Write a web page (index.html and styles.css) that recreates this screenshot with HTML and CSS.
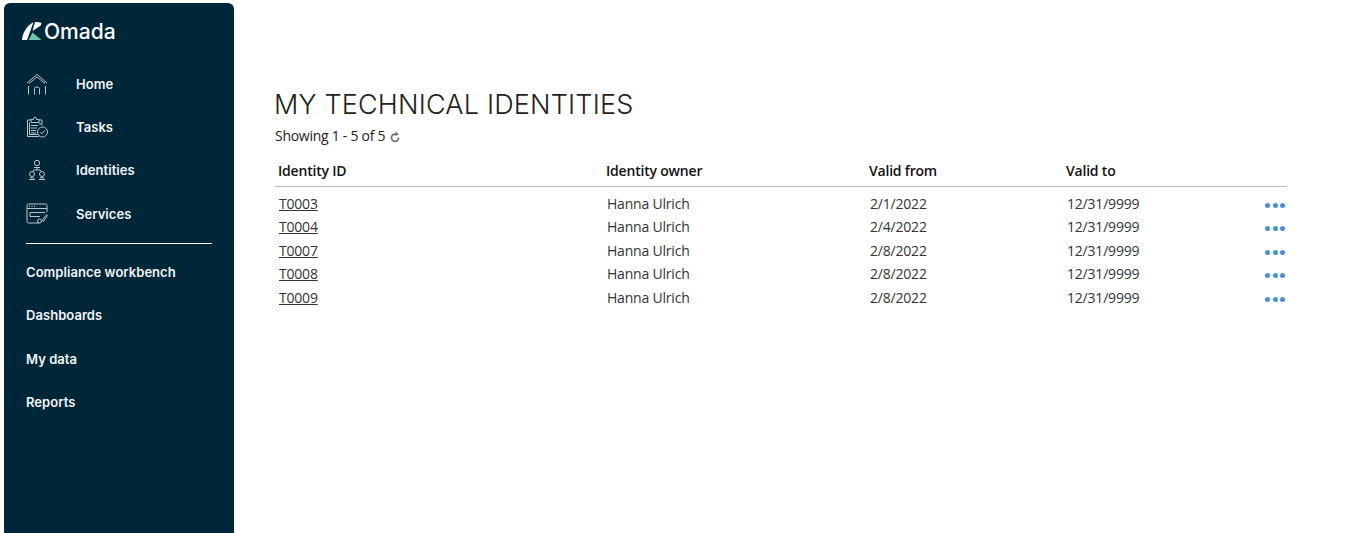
FILE: index.html
```html
<!DOCTYPE html>
<html lang="en">
<head>
<meta charset="utf-8">
<title>My technical identities</title>
<link rel="stylesheet" href="styles.css">
</head>
<body>
<div class="app">
  <nav class="sidebar">
    <div class="logo">
      <svg class="logo-mark" viewBox="0 0 20 18" width="20" height="18">
        <path d="M0 18 C0.5 11 4.5 4 11.5 0 L8.5 8.5 L5 18 Z" fill="#fff"/>
        <path d="M13 0 C15.5 0 17.8 0.3 19.5 1 L18.8 3.5 L10.5 9 Z" fill="#fff"/>
        <path d="M10.5 10.5 L19.5 18 L6.5 18 Z" fill="#6fc6a6"/>
      </svg>
      <span class="logo-text">Omada</span>
    </div>
    <ul class="main-nav">
      <li class="nav-item">
        <svg class="nav-icon" viewBox="0 0 22 22" width="22" height="22" fill="none" stroke="#b9c4ca" stroke-width="1">
          <path d="M1 10 L11 1.5 L21 10"/><path d="M3 10.5 L11 4 L19 10.5"/><path d="M2.5 13 V21.5 M19.5 13 V21.5"/><path d="M8.5 21.5 V15.5 Q8.5 14 11 14 Q13.5 14 13.5 15.5 V21.5"/>
        </svg>
        <span>Home</span>
      </li>
      <li class="nav-item">
        <svg class="nav-icon" viewBox="0 0 22 22" width="22" height="22" fill="none" stroke="#b9c4ca" stroke-width="1">
          <path d="M13 20.5 H1.5 V4 H5 M13 4 H16 V9.5"/><path d="M5 3.5 H7.5 Q7.5 1 9 1 Q10.5 1 10.5 3.5 H13 V6.5 H5 Z"/><path d="M3.5 6.5 V18.5 H11.5 M14 6.5 V9"/><path d="M5 9.5 H12 M5 12 H11 M5 14.5 H10 M5 17 H10"/><circle cx="16.5" cy="16" r="5"/><path d="M14.3 16 L16 17.8 L18.8 14.4"/>
        </svg>
        <span>Tasks</span>
      </li>
      <li class="nav-item">
        <svg class="nav-icon" viewBox="0 0 22 22" width="22" height="22" fill="none" stroke="#b9c4ca" stroke-width="1">
          <circle cx="11" cy="4" r="2.7"/><path d="M8 8.5 H14"/><path d="M11 8.5 V11 M6 13 L8 11 H14 L16 13"/><circle cx="6" cy="15" r="2.5"/><circle cx="16" cy="15" r="2.5"/><path d="M3 20.5 H9 M13 20.5 H19 M4 18.8 H8 M14 18.8 H18"/>
        </svg>
        <span>Identities</span>
      </li>
      <li class="nav-item">
        <svg class="nav-icon" viewBox="0 0 22 22" width="22" height="22" fill="none" stroke="#b9c4ca" stroke-width="1">
          <path d="M13 20 H2.5 Q1 20 1 18.5 V2.5 Q1 1 2.5 1 H19.5 Q21 1 21 2.5 V9"/><path d="M1 5.5 H21"/><path d="M3 3.3 H4 M5.5 3.3 H6.5 M8 3.3 H9" stroke-width="1.2"/><path d="M19 9.5 H4 V13.5 H14"/><path d="M15 19 L20.5 11.5 L21.5 12.5 L17 19"/><circle cx="13.5" cy="18" r="2"/>
        </svg>
        <span>Services</span>
      </li>
    </ul>
    <hr class="nav-rule">
    <ul class="sub-nav">
      <li>Compliance workbench</li>
      <li>Dashboards</li>
      <li>My data</li>
      <li>Reports</li>
    </ul>
  </nav>
  <main class="content">
    <h1 class="title">MY TECHNICAL IDENTITIES</h1>
    <p class="summary">Showing 1 - 5 of 5
      <svg class="refresh" viewBox="0 0 10 12" width="10" height="12" fill="none" stroke="#777" stroke-width="1.8">
        <path d="M6.8 3.6 A3.6 3.6 0 1 0 8.6 6.5"/><path d="M5.4 0.4 V5.2 L9 3.2 Z" fill="#777" stroke="none"/>
      </svg>
    </p>
    <table class="grid">
      <thead>
        <tr><th class="c-id">Identity ID</th><th class="c-owner">Identity owner</th><th class="c-from">Valid from</th><th class="c-to">Valid to</th><th class="c-act"></th></tr>
      </thead>
      <tbody>
        <tr><td><a href="#">T0003</a></td><td>Hanna Ulrich</td><td>2/1/2022</td><td>12/31/9999</td><td class="act"><span class="dots"><i></i><i></i><i></i></span></td></tr>
        <tr><td><a href="#">T0004</a></td><td>Hanna Ulrich</td><td>2/4/2022</td><td>12/31/9999</td><td class="act"><span class="dots"><i></i><i></i><i></i></span></td></tr>
        <tr><td><a href="#">T0007</a></td><td>Hanna Ulrich</td><td>2/8/2022</td><td>12/31/9999</td><td class="act"><span class="dots"><i></i><i></i><i></i></span></td></tr>
        <tr><td><a href="#">T0008</a></td><td>Hanna Ulrich</td><td>2/8/2022</td><td>12/31/9999</td><td class="act"><span class="dots"><i></i><i></i><i></i></span></td></tr>
        <tr><td><a href="#">T0009</a></td><td>Hanna Ulrich</td><td>2/8/2022</td><td>12/31/9999</td><td class="act"><span class="dots"><i></i><i></i><i></i></span></td></tr>
      </tbody>
    </table>
  </main>
</div>
</body>
</html>
```
FILE: styles.css
```css
* { box-sizing: border-box; }
html, body { margin: 0; height: 100%; overflow: hidden; background: #fff; }
body { font-family: "Open Sans", "Liberation Sans", sans-serif; color: #222; }
.app { display: flex; height: 533px; padding: 3px 0 0 4px; }
.sidebar { width: 230px; flex: none; background: #002639; border-radius: 6px 6px 0 0; color: #f2f4f5; font-family: Inter, "Liberation Sans", sans-serif; font-weight: 600; font-size: 13px; letter-spacing: 0.05px; }
.logo { display: flex; align-items: center; gap: 2px; height: 30px; margin: 13px 0 0 18px; }
.logo-mark { flex: none; }
.logo-text { font-size: 21px; font-weight: 500; letter-spacing: 0; color: #fff; }
.main-nav, .sub-nav { list-style: none; margin: 0; padding: 0; }
.main-nav { margin-top: 16px; }
.nav-item { display: flex; align-items: center; height: 43.3px; padding-left: 22px; }
.nav-icon { flex: none; margin-right: 28px; }
.nav-rule { border: 0; border-top: 1px solid #fff; margin: 8px 22px 0 22px; }
.sub-nav { margin-top: 7px; padding-left: 22px; }
.sub-nav li { height: 43.3px; line-height: 43.3px; }
.content { flex: 1; padding: 0 73px 0 41px; min-width: 0; }
.title { margin: 84px 0 0 -1px; font-family: Inter, "Liberation Sans", sans-serif; font-weight: 300; font-size: 27px; line-height: 36px; color: #222; letter-spacing: 0.18px; }
.summary { margin: 3px 0 0; font-size: 14px; line-height: 20px; letter-spacing: -0.27px; }
.refresh { vertical-align: -2px; margin-left: 1px; }
.grid { width: 100%; margin-top: 12px; border-collapse: collapse; table-layout: fixed; font-size: 14px; letter-spacing: -0.2px; }
.grid th { text-align: left; font-weight: 600; color: #111; height: 28px; padding: 0 0 3px 3px; border-bottom: 1px solid #b9b9b9; }
.grid td { padding: 0 0 0 4px; height: 23.4px; color: #333; }
.grid tbody tr:first-child td { height: 29.3px; padding-top: 6px; }
.c-id { width: 328px; }
.c-owner { width: 263px; }
.c-from { width: 197px; }
.c-to { width: 198px; }
.grid a { color: #333; }
.act { text-align: right; }
.dots { display: inline-flex; gap: 2.5px; margin-right: 2px; vertical-align: 1px; }
.dots i { width: 5px; height: 5px; border-radius: 50%; background: #4a90d9; }
```
